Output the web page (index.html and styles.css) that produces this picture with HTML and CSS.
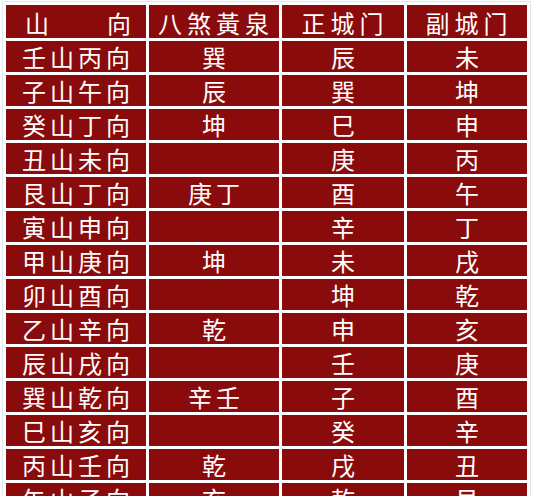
FILE: index.html
```html
<!DOCTYPE html>
<html lang="zh">
<head>
<meta charset="utf-8">
<title>八煞黃泉</title>
<link rel="stylesheet" href="styles.css">
</head>
<body>
<table class="tbl">
  <colgroup>
    <col class="c1"><col class="c2"><col class="c3"><col class="c4">
  </colgroup>
  <thead>
    <tr class="head">
      <th><span class="split"><span>山</span><span>向</span></span></th>
      <th>八煞黃泉</th>
      <th>正城门</th>
      <th>副城门</th>
    </tr>
  </thead>
  <tbody>
    <tr><td>壬山丙向</td><td>巽</td><td>辰</td><td>未</td></tr>
    <tr><td>子山午向</td><td>辰</td><td>巽</td><td>坤</td></tr>
    <tr><td>癸山丁向</td><td>坤</td><td>巳</td><td>申</td></tr>
    <tr><td>丑山未向</td><td></td><td>庚</td><td>丙</td></tr>
    <tr><td>艮山丁向</td><td>庚丁</td><td>酉</td><td>午</td></tr>
    <tr><td>寅山申向</td><td></td><td>辛</td><td>丁</td></tr>
    <tr><td>甲山庚向</td><td>坤</td><td>未</td><td>戌</td></tr>
    <tr><td>卯山酉向</td><td></td><td>坤</td><td>乾</td></tr>
    <tr><td>乙山辛向</td><td>乾</td><td>申</td><td>亥</td></tr>
    <tr><td>辰山戌向</td><td></td><td>壬</td><td>庚</td></tr>
    <tr><td>巽山乾向</td><td>辛壬</td><td>子</td><td>酉</td></tr>
    <tr><td>巳山亥向</td><td></td><td>癸</td><td>辛</td></tr>
    <tr><td>丙山壬向</td><td>乾</td><td>戌</td><td>丑</td></tr>
    <tr><td>午山子向</td><td>亥</td><td>乾</td><td>艮</td></tr>
  </tbody>
</table>
</body>
</html>
```

FILE: styles.css
```css
html, body {
  margin: 0;
  padding: 0;
  background: #ffffff;
}

body {
  padding: 1px 0 0 2px;
  font-family: "Noto Sans CJK SC", "Noto Sans CJK TC", sans-serif;
}

.tbl {
  border-collapse: separate;
  border-spacing: 3px;
  border: 1px solid #dfe6ef;
  table-layout: fixed;
  width: 529px;
}

.c1 { width: 140px; }
.c2 { width: 130px; }
.c3 { width: 122px; }
.c4 { width: 120px; }

.tbl th,
.tbl td {
  background: #8a0b0b;
  color: #ffffff;
  height: 31px;
  padding: 0 0 0 4px;
  text-align: center;
  vertical-align: middle;
  font-size: 24px;
  line-height: 28px;
  font-weight: 400;
  letter-spacing: 4px;
  white-space: nowrap;
}

.tbl th {
  padding-top: 2px;
  letter-spacing: 5px;
}

.split {
  display: inline-flex;
  justify-content: space-between;
  width: 106px;
  letter-spacing: 0;
}
```
